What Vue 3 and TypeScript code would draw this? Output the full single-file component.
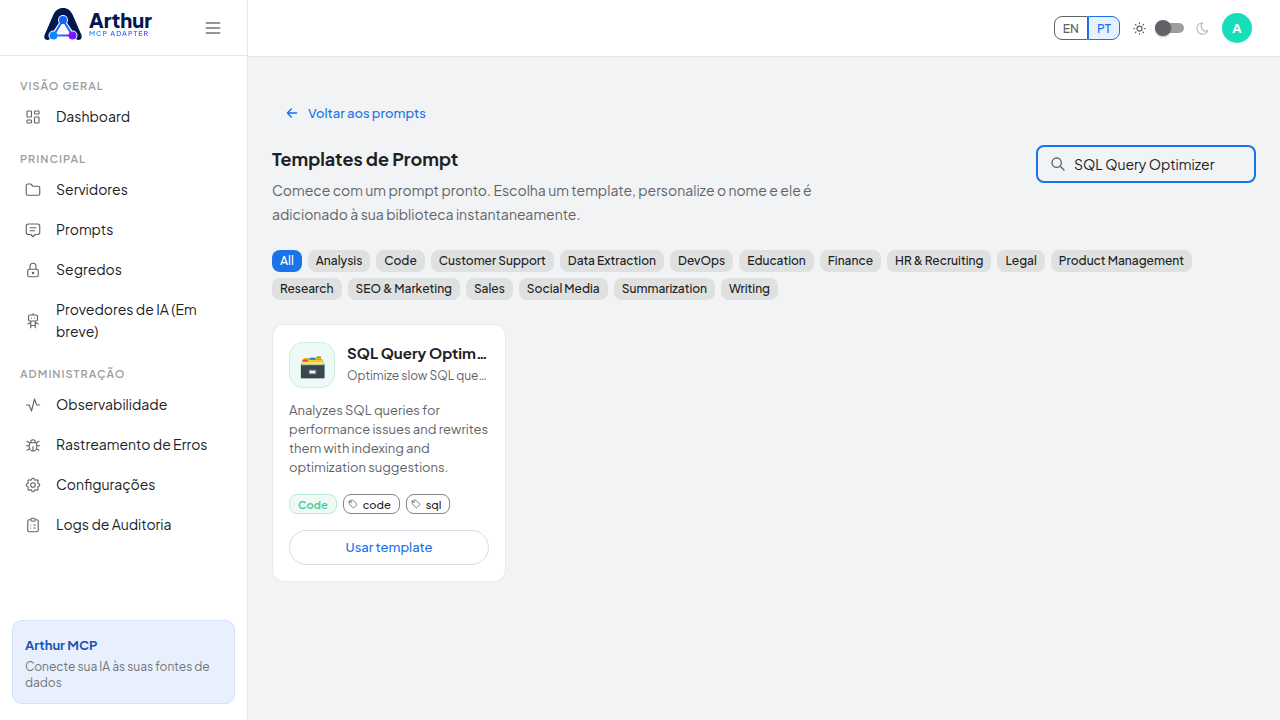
<script setup lang="ts">
import { computed, ref } from 'vue'

interface NavItem {
  label: string
  icon: string
}
interface NavGroup {
  title: string
  items: NavItem[]
}

const icons: Record<string, string> = {
  dashboard:
    'M5 4h4a1 1 0 0 1 1 1v6a1 1 0 0 1-1 1H5a1 1 0 0 1-1-1V5a1 1 0 0 1 1-1M5 16h4a1 1 0 0 1 1 1v2a1 1 0 0 1-1 1H5a1 1 0 0 1-1-1v-2a1 1 0 0 1 1-1M15 12h4a1 1 0 0 1 1 1v6a1 1 0 0 1-1 1h-4a1 1 0 0 1-1-1v-6a1 1 0 0 1 1-1M15 4h4a1 1 0 0 1 1 1v2a1 1 0 0 1-1 1h-4a1 1 0 0 1-1-1V5a1 1 0 0 1 1-1',
  folder: 'M5 4h4l3 3h7a2 2 0 0 1 2 2v8a2 2 0 0 1-2 2H5a2 2 0 0 1-2-2V6a2 2 0 0 1 2-2',
  message: 'M8 9h8M8 13h6M9 18H6a3 3 0 0 1-3-3V7a3 3 0 0 1 3-3h12a3 3 0 0 1 3 3v8a3 3 0 0 1-3 3h-3l-3 3z',
  lock: 'M5 13a2 2 0 0 1 2-2h10a2 2 0 0 1 2 2v6a2 2 0 0 1-2 2H7a2 2 0 0 1-2-2zM11 16a1 1 0 1 0 2 0a1 1 0 0 0-2 0M8 11V7a4 4 0 1 1 8 0v4',
  robot: 'M6 6a2 2 0 0 1 2-2h8a2 2 0 0 1 2 2v4a2 2 0 0 1-2 2H8a2 2 0 0 1-2-2zM12 2v2M9 12v9M15 12v9M5 16l4-2M15 14l4 2M9 18h6M10 8v.01M14 8v.01',
  activity: 'M3 12h4l3 8l4-16l3 8h4',
  bug: 'M9 9V8a3 3 0 0 1 6 0v1M8 9h8a6 6 0 0 1 1 3v3a5 5 0 0 1-10 0v-3a6 6 0 0 1 1-3M3 13h4M17 13h4M12 20v-6M4 19l3.35-2M20 19l-3.35-2M4 7l3.75 2.4M20 7l-3.75 2.4',
  settings:
    'M10.325 4.317c.426-1.756 2.924-1.756 3.35 0a1.724 1.724 0 0 0 2.573 1.066c1.543-.94 3.31.826 2.37 2.37a1.724 1.724 0 0 0 1.065 2.572c1.756.426 1.756 2.924 0 3.35a1.724 1.724 0 0 0-1.066 2.573c.94 1.543-.826 3.31-2.37 2.37a1.724 1.724 0 0 0-2.572 1.065c-.426 1.756-2.924 1.756-3.35 0a1.724 1.724 0 0 0-2.573-1.066c-1.543.94-3.31-.826-2.37-2.37a1.724 1.724 0 0 0-1.065-2.572c-1.756-.426-1.756-2.924 0-3.35a1.724 1.724 0 0 0 1.066-2.573c-.94-1.543.826-3.31 2.37-2.37c1 .608 2.296.07 2.572-1.065zM9 12a3 3 0 1 0 6 0a3 3 0 0 0-6 0',
  clipboard:
    'M9 5H7a2 2 0 0 0-2 2v12a2 2 0 0 0 2 2h10a2 2 0 0 0 2-2V7a2 2 0 0 0-2-2h-2M9 5a2 2 0 0 1 2-2h2a2 2 0 0 1 2 2a2 2 0 0 1-2 2h-2a2 2 0 0 1-2-2zM9 12h.01M13 12h2M9 16h.01M13 16h2',
}

const groups: NavGroup[] = [
  { title: 'Visão geral', items: [{ label: 'Dashboard', icon: 'dashboard' }] },
  {
    title: 'Principal',
    items: [
      { label: 'Servidores', icon: 'folder' },
      { label: 'Prompts', icon: 'message' },
      { label: 'Segredos', icon: 'lock' },
      { label: 'Provedores de IA (Em breve)', icon: 'robot' },
    ],
  },
  {
    title: 'Administração',
    items: [
      { label: 'Observabilidade', icon: 'activity' },
      { label: 'Rastreamento de Erros', icon: 'bug' },
      { label: 'Configurações', icon: 'settings' },
      { label: 'Logs de Auditoria', icon: 'clipboard' },
    ],
  },
]

const categories: string[] = [
  'All', 'Analysis', 'Code', 'Customer Support', 'Data Extraction', 'DevOps', 'Education', 'Finance',
  'HR & Recruiting', 'Legal', 'Product Management', 'Research', 'SEO & Marketing', 'Sales',
  'Social Media', 'Summarization', 'Writing',
]

const templates = [
  {
    emoji: '🗃️',
    title: 'SQL Query Optimizer',
    subtitle: 'Optimize slow SQL queries',
    text: 'Analyzes SQL queries for performance issues and rewrites them with indexing and optimization suggestions.',
    category: 'Code',
    tags: ['code', 'sql'],
  },
]

const language = ref('PT')
const dark = ref(false)
const category = ref('All')
const query = ref('SQL Query Optimizer')

const visible = computed(() =>
  templates.filter(
    (t) =>
      (category.value === 'All' || t.category === category.value) &&
      t.title.toLowerCase().includes(query.value.toLowerCase()),
  ),
)
</script>

<template>
  <div class="shell">
    <aside class="sidebar">
      <div class="brand">
        <a class="logo" href="#" aria-label="Arthur MCP Adapter">
          <svg class="logo-mark" viewBox="0 0 40 34" aria-hidden="true">
            <defs>
              <linearGradient id="edge" x1="0" x2="1"><stop stop-color="#0894ff" /><stop offset="1" stop-color="#7a1cff" /></linearGradient>
            </defs>
            <path d="M4.500 33C1.500 33 0.500 30 2 27L10 8.500C12.500 3 15.500 1 20 1S27.500 3 30 8.500L38 27C39.500 30 38.500 33 35.500 33C33 33 31 30 30 28H10C9 30 7 33 4.500 33z" fill="#04164f" />
            <path d="M20 14L10.500 28.500H29.500z" fill="#fff" stroke="#fff" stroke-width="5" stroke-linejoin="round" />
            <circle cx="20" cy="13" r="5" fill="#fff" />
            <circle cx="10.500" cy="28.500" r="5" fill="#fff" />
            <circle cx="29.500" cy="28.500" r="5" fill="#fff" />
            <path d="M20 13L10.500 28.500M20 13L29.500 28.500" fill="none" stroke="#1568ff" stroke-width="2" />
            <rect x="11" y="27.500" width="18" height="2" fill="url(#edge)" />
            <circle cx="20" cy="13" r="4" fill="#1462ff" />
            <circle cx="10.500" cy="28.500" r="4" fill="#078cff" />
            <circle cx="29.500" cy="28.500" r="4" fill="#7a18ff" />
          </svg>
          <span class="logo-words">
            <span class="logo-name">Arthur</span>
            <span class="logo-sub">MCP ADAPTER</span>
          </span>
        </a>
        <button class="menu" type="button" aria-label="Menu">
          <svg class="icon menu-icon" viewBox="0 0 24 24"><path d="M4 6h16M4 12h16M4 18h16" /></svg>
        </button>
      </div>

      <nav class="nav">
        <section v-for="group in groups" :key="group.title" class="group">
          <h2 class="group-title">{{ group.title }}</h2>
          <a v-for="item in group.items" :key="item.label" class="nav-link" href="#">
            <svg class="icon nav-icon" viewBox="0 0 24 24" aria-hidden="true"><path :d="icons[item.icon]" /></svg>
            <span class="nav-label">{{ item.label }}</span>
          </a>
        </section>
      </nav>

      <div class="promo">
        <strong class="promo-title">Arthur MCP</strong>
        <p class="promo-text">Conecte sua IA às suas fontes de dados</p>
      </div>
    </aside>

    <div class="page">
      <header class="topbar">
        <div class="lang" role="group" aria-label="Idioma">
          <button
            v-for="code in ['EN', 'PT']"
            :key="code"
            type="button"
            class="lang-button"
            :class="{ active: language === code }"
            @click="language = code"
          >{{ code }}</button>
        </div>
        <div class="theme">
          <svg class="icon theme-icon sun" viewBox="0 0 24 24" aria-hidden="true">
            <path d="M8 12a4 4 0 1 0 8 0a4 4 0 1 0-8 0M3 12h1m8-9v1m8 8h1m-9 8v1M5.600 5.600l.7.7m12.100-.7l-.7.7m0 11.400l.7.7m-12.100-.7l-.7.7" />
          </svg>
          <input v-model="dark" class="switch" type="checkbox" role="switch" aria-label="Tema escuro" />
          <svg class="icon theme-icon moon" viewBox="0 0 24 24" aria-hidden="true">
            <path d="M12 3h.393a7.500 7.500 0 0 0 7.920 12.446A9 9 0 1 1 12 2.992z" />
          </svg>
        </div>
        <button class="avatar" type="button">A</button>
      </header>

      <main class="content">
        <a class="back" href="#">
          <svg class="icon back-icon" viewBox="0 0 24 24" aria-hidden="true"><path d="M5 12h14M5 12l6 6M5 12l6-6" /></svg>
          Voltar aos prompts
        </a>

        <div class="heading">
          <div class="intro">
            <h1 class="title">Templates de Prompt</h1>
            <p class="lead">Comece com um prompt pronto. Escolha um template, personalize o nome e ele é adicionado à sua biblioteca instantaneamente.</p>
          </div>
          <label class="search">
            <svg class="icon search-icon" viewBox="0 0 24 24" aria-hidden="true"><path d="M3 10a7 7 0 1 0 14 0a7 7 0 1 0-14 0M21 21l-6-6" /></svg>
            <input v-model="query" class="search-input" type="text" aria-label="Buscar templates" />
          </label>
        </div>

        <div class="chips">
          <button
            v-for="name in categories"
            :key="name"
            type="button"
            class="chip"
            :class="{ selected: category === name }"
            @click="category = name"
          >{{ name }}</button>
        </div>

        <div class="cards">
          <article v-for="item in visible" :key="item.title" class="card">
            <div class="card-head">
              <div class="tile" aria-hidden="true">{{ item.emoji }}</div>
              <div class="card-names">
                <h3 class="card-title">{{ item.title }}</h3>
                <p class="card-sub">{{ item.subtitle }}</p>
              </div>
            </div>
            <p class="card-text">{{ item.text }}</p>
            <div class="tags">
              <span class="tag category">{{ item.category }}</span>
              <span v-for="tag in item.tags" :key="tag" class="tag">
                <svg class="icon tag-icon" viewBox="0 0 24 24" aria-hidden="true">
                  <path d="M6.500 7.500a1 1 0 1 0 2 0a1 1 0 1 0-2 0M3 6v5.172a2 2 0 0 0 .586 1.414l7.710 7.710a2.410 2.410 0 0 0 3.408 0l5.592-5.592a2.410 2.410 0 0 0 0-3.408l-7.710-7.710A2 2 0 0 0 11.172 3H6a3 3 0 0 0-3 3z" />
                </svg>
                {{ tag }}
              </span>
            </div>
            <button class="use" type="button">Usar template</button>
          </article>
        </div>
      </main>
    </div>
  </div>
</template>

<style>
body {
  margin: 0;
  background: #f1f3f5;
}
</style>

<style scoped>
.shell,
.shell * {
  box-sizing: border-box;
}
.shell {
  display: flex;
  min-height: 100vh;
  background: #f1f3f5;
  color: #202124;
  font-family: 'Plus Jakarta Sans', Inter, sans-serif;
  font-size: 14px;
}
button,
input {
  font: inherit;
}
button {
  cursor: pointer;
}
a {
  text-decoration: none;
}
h1,
h2,
h3,
p {
  margin: 0;
}
.icon {
  flex: none;
  fill: none;
  stroke: currentColor;
  stroke-width: 1.5;
  stroke-linecap: round;
  stroke-linejoin: round;
}

/* Sidebar */
.sidebar {
  display: flex;
  flex: none;
  flex-direction: column;
  width: 248px;
  background: #fff;
  border-right: 1px solid #e4e6ec;
}
.brand {
  display: flex;
  align-items: center;
  justify-content: space-between;
  height: 56px;
  padding: 0 24px 0 43px;
  border-bottom: 1px solid #e4e6ec;
}
.logo {
  display: flex;
  align-items: center;
  gap: 6px;
  padding-bottom: 8px;
}
.logo-mark {
  width: 40px;
  height: 34px;
}
.logo-words {
  display: flex;
  flex-direction: column;
}
.logo-name {
  color: #04164f;
  font-size: 20px;
  font-weight: 800;
  line-height: 20px;
}
.logo-sub {
  background: linear-gradient(90deg, #0c98ff, #7a35ff);
  background-clip: text;
  color: transparent;
  font-size: 7px;
  font-weight: 600;
  line-height: 8px;
  letter-spacing: 1px;
}
.menu {
  display: flex;
  padding: 0;
  background: none;
  border: 0;
  color: #70757a;
}
.menu-icon {
  width: 20px;
  height: 20px;
  stroke-width: 2;
}
.nav {
  flex: 1;
  padding: 20px 12px 0;
}
.group {
  margin-bottom: 12px;
}
.group-title {
  padding: 0 8px 2px;
  color: #9e9e9e;
  font-size: 11px;
  font-weight: 600;
  line-height: 19px;
  letter-spacing: 1px;
  text-transform: uppercase;
}
.nav-link {
  display: flex;
  align-items: center;
  gap: 14px;
  min-height: 40px;
  padding: 8px 12px;
  color: #202124;
  line-height: 22px;
}
.nav-label {
  padding-bottom: 2px;
}
.nav-icon {
  width: 18px;
  height: 18px;
  color: #5f6368;
}
.promo {
  margin: 0 12px 16px;
  padding: 14px 12px 12px;
  background: #e8f0fe;
  border: 1px solid #d2e0fc;
  border-radius: 10px;
}
.promo-title {
  display: block;
  color: #1a56b8;
  font-size: 13px;
  line-height: 20px;
}
.promo-text {
  margin-top: 4px;
  color: #70757a;
  font-size: 12px;
  line-height: 16px;
}

/* Top bar */
.page {
  flex: 1;
  min-width: 0;
}
.topbar {
  display: flex;
  align-items: center;
  justify-content: flex-end;
  gap: 12px;
  height: 57px;
  padding: 0 28px;
  background: #fff;
  border-bottom: 1px solid #e4e6ec;
}
.lang {
  display: flex;
}
.lang-button {
  height: 24px;
  padding: 0 8px;
  background: #fff;
  border: 1px solid #5f6368;
  border-radius: 8px 0 0 8px;
  color: #5f6368;
  font-size: 12px;
  font-weight: 500;
}
.lang-button + .lang-button {
  border-radius: 0 8px 8px 0;
}
.lang-button.active {
  background: #e8f0fe;
  border-color: #1a73e8;
  color: #1a73e8;
}
.theme {
  display: flex;
  align-items: center;
  gap: 8px;
}
.theme-icon {
  width: 15px;
  height: 15px;
}
.sun {
  color: #5f6368;
  stroke-width: 2;
}
.moon {
  margin-left: 3px;
  color: #bdbdbd;
  stroke-width: 2;
}
.switch {
  position: relative;
  width: 29px;
  height: 10px;
  margin: 0;
  appearance: none;
  background: #9e9e9e;
  border-radius: 5px;
  cursor: pointer;
}
.switch::before {
  position: absolute;
  top: -3px;
  left: 0;
  width: 16px;
  height: 16px;
  background: #5f6368;
  border-radius: 50%;
  box-shadow: 0 1px 2px rgba(0, 0, 0, 0.3);
  content: '';
}
.switch:checked::before {
  left: 13px;
}
.avatar {
  width: 30px;
  height: 30px;
  padding: 0;
  background: #15deb9;
  border: 0;
  border-radius: 50%;
  color: #fff;
  font-size: 13px;
  font-weight: 700;
}

/* Content */
.content {
  padding: 40px 24px;
}
.back {
  display: inline-flex;
  align-items: center;
  gap: 8px;
  height: 32px;
  padding: 0 12px;
  color: #1a73e8;
  font-size: 13px;
  font-weight: 500;
}
.back-icon {
  width: 16px;
  height: 16px;
  stroke-width: 2;
}
.heading {
  display: flex;
  align-items: flex-start;
  justify-content: space-between;
  gap: 24px;
  margin-top: 16px;
}
.intro {
  max-width: 560px;
}
.title {
  font-size: 18px;
  font-weight: 700;
  line-height: 28px;
}
.lead {
  margin-top: 5px;
  color: #5f6368;
  line-height: 24px;
}
.search {
  display: flex;
  flex: none;
  align-items: center;
  gap: 8px;
  width: 220px;
  height: 38px;
  padding: 0 12px;
  border: 2px solid #1a73e8;
  border-radius: 8px;
}
.search-icon {
  width: 16px;
  height: 16px;
  color: #5f6368;
  stroke-width: 2;
}
.search-input {
  flex: 1;
  min-width: 0;
  padding: 0;
  background: none;
  border: 0;
  outline: 0;
  color: #202124;
}
.chips {
  display: flex;
  flex-wrap: wrap;
  gap: 6px;
  margin-top: 24px;
}
.chip {
  height: 22px;
  padding: 0 8px 2px;
  background: #dfe1e0;
  border: 0;
  border-radius: 8px;
  color: #202124;
  font-size: 12px;
  font-weight: 500;
}
.chip.selected {
  background: #1a73e8;
  color: #fff;
}
.cards {
  display: grid;
  grid-template-columns: repeat(auto-fill, minmax(230px, 1fr));
  gap: 16px;
  margin-top: 24px;
}
.card {
  min-width: 0;
  padding: 17px 16px 16px;
  background: #fff;
  border: 1px solid #e8eaed;
  border-radius: 12px;
}
.card-head {
  display: flex;
  align-items: center;
  gap: 12px;
}
.tile {
  display: grid;
  flex: none;
  place-items: center;
  width: 46px;
  height: 46px;
  background: #edfaf5;
  border: 1px solid #c8efe0;
  border-radius: 14px;
  font-size: 22px;
}
.card-names {
  min-width: 0;
  padding-bottom: 2px;
}
.card-title,
.card-sub {
  overflow: hidden;
  text-overflow: ellipsis;
  white-space: nowrap;
}
.card-title {
  font-size: 15px;
  font-weight: 700;
  line-height: 22px;
}
.card-sub {
  margin-top: 2px;
  color: #5f6368;
  font-size: 12px;
  line-height: 20px;
}
.card-text {
  margin-top: 13px;
  color: #5f6368;
  font-size: 13px;
  line-height: 19px;
}
.tags {
  display: flex;
  gap: 6px;
  margin-top: 17px;
}
.tag {
  display: flex;
  align-items: center;
  gap: 5px;
  height: 20px;
  padding: 0 8px 0 4px;
  border: 1px solid #80868b;
  border-radius: 8px;
  font-size: 11px;
  font-weight: 500;
}
.tag.category {
  padding: 0 8px;
  background: #edfaf5;
  border-color: #b9ecd6;
  color: #44c98f;
  font-weight: 600;
}
.tag-icon {
  width: 10px;
  height: 10px;
  color: #5f6368;
  stroke-width: 2;
}
.use {
  width: 100%;
  height: 35px;
  margin-top: 16px;
  padding: 0 0 2px;
  background: #fff;
  border: 1px solid #dadce0;
  border-radius: 18px;
  color: #1a73e8;
  font-size: 13px;
  font-weight: 500;
}
</style>
